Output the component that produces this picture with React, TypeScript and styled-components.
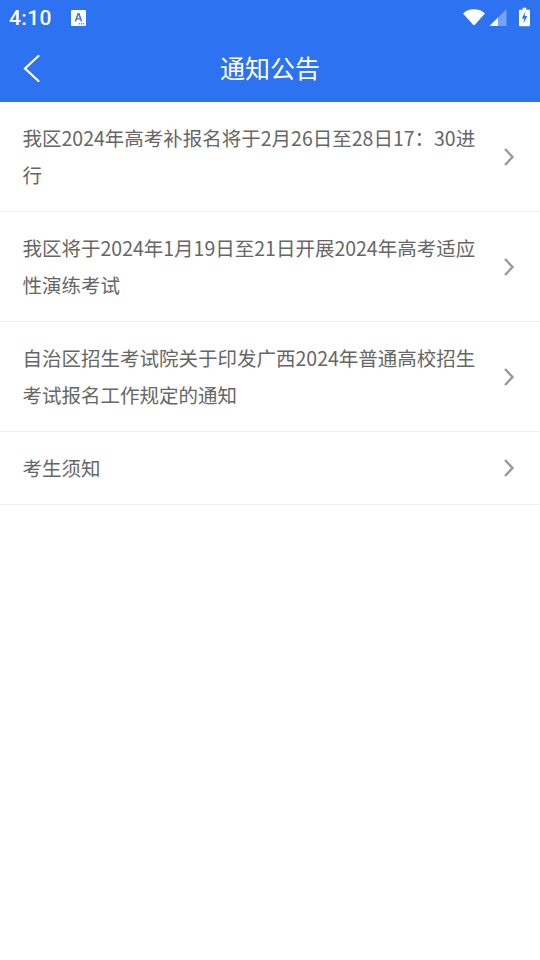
import React from "react";
import styled, { createGlobalStyle } from "styled-components";

const GlobalStyle = createGlobalStyle`
    html, body {
        margin: 0;
        padding: 0;
        background: #ffffff;
    }
`;

const PageContainer = styled.div`
    width: 540px;
    height: 960px;
    background: #ffffff;
    overflow: hidden;
    font-family: "Noto Sans CJK SC", "Noto Sans", sans-serif;
`;

const Header = styled.header`
    background: #2d72f0;
    height: 102px;
    display: flex;
    flex-direction: column;
`;

const StatusBar = styled.div`
    height: 36px;
    display: flex;
    align-items: center;
    padding: 0 10px 0 9px;
    color: #ffffff;
`;

const Clock = styled.span`
    font-family: Roboto, sans-serif;
    font-size: 21px;
    font-weight: 500;
    letter-spacing: 0.4px;
    line-height: 36px;
`;

const StatusLeft = styled.div`
    display: flex;
    align-items: center;
    gap: 19px;
    flex: 1;
`;

const StatusRight = styled.div`
    display: flex;
    align-items: center;
    padding-bottom: 2px;
`;

const TitleBar = styled.div`
    flex: 1;
    display: flex;
    align-items: center;
    padding: 0 20px 4px;
    position: relative;
`;

const BackButton = styled.span`
    display: flex;
    position: absolute;
    left: 22px;
    top: 17px;
`;

const Title = styled.h1`
    flex: 1;
    margin: 0;
    text-align: center;
    font-size: 25px;
    font-weight: 400;
    color: #ffffff;
    line-height: 32px;
`;

const List = styled.ul`
    list-style: none;
    margin: 0;
    padding: 0;
`;

const Row = styled.li`
    display: flex;
    align-items: center;
    justify-content: space-between;
    padding: 17px 23px 18px 22.5px;
    border-bottom: 1px solid #eeeeee;
`;

const RowText = styled.span`
    width: 456px;
    font-size: 19.5px;
    line-height: 37px;
    color: #666666;
`;

const Chevron = styled.svg`
    margin: 1px 2px 0 0;
    flex: none;
`;

const notices = [
    "我区2024年高考补报名将于2月26日至28日17：30进行",
    "我区将于2024年1月19日至21日开展2024年高考适应性演练考试",
    "自治区招生考试院关于印发广西2024年普通高校招生考试报名工作规定的通知",
    "考生须知",
];

export default function App() {
    return (
        <PageContainer>
            <GlobalStyle />
            <Header>
                <StatusBar>
                    <StatusLeft>
                        <Clock>4:10</Clock>
                        <svg width="15" height="16" viewBox="0 0 15 16">
                            <rect width="15" height="16" rx="1" fill="#ffffff" />
                            <path d="M3.6 11.5 L6.6 3 H8.4 L11.4 11.5 H9.8 L9.2 9.6 H5.8 L5.2 11.5 Z M6.3 8.2 H8.7 L7.5 4.8 Z" fill="#2d72f0" fillRule="evenodd" />
                            <rect x="8" y="13.2" width="1.2" height="1.2" fill="#2d72f0" />
                            <rect x="10" y="13.2" width="1.2" height="1.2" fill="#2d72f0" />
                            <rect x="12" y="13.2" width="1.2" height="1.2" fill="#2d72f0" />
                        </svg>
                    </StatusLeft>
                    <StatusRight>
                        <svg width="22" height="17" viewBox="0 0 24 18">
                            <path d="M0 4.5 C3 1.7 7 0 12 0 C17 0 21 1.7 24 4.5 L13 17 Q12 18 11 17 Z" fill="#ffffff" />
                        </svg>
                        <svg width="18" height="17" viewBox="0 0 18 18" style={{ marginLeft: 4 }}>
                            <path d="M18 0 V18 H0 Z" fill="#ffffff" opacity="0.35" />
                            <path d="M9 9 V18 H0 Z" fill="#ffffff" />
                        </svg>
                        <svg width="11" height="20" viewBox="0 0 12 20" style={{ marginLeft: 12 }}>
                            <path d="M4 0 H8 V2 H11 Q12 2 12 3 V19 Q12 20 11 20 H1 Q0 20 0 19 V3 Q0 2 1 2 H4 Z" fill="#ffffff" />
                            <path d="M7 4 L3 11.5 H5.6 L4.8 17 L9 9 H6.3 Z" fill="#2d72f0" />
                        </svg>
                    </StatusRight>
                </StatusBar>
                <TitleBar>
                    <BackButton>
                        <svg width="20" height="30" viewBox="0 0 20 30">
                            <path d="M16.5 3 L3 15.5 L16.5 28" fill="none" stroke="#ffffff" strokeWidth="2.2" strokeLinecap="round" strokeLinejoin="miter" />
                        </svg>
                    </BackButton>
                    <Title>通知公告</Title>
                </TitleBar>
            </Header>
            <List>
                {notices.map((text) => (
                    <Row key={text}>
                        <RowText>{text}</RowText>
                        <Chevron width="12" height="20" viewBox="0 0 12 20">
                            <path d="M2 2 L9.5 10 L2 18" fill="none" stroke="#999999" strokeWidth="2.4" />
                        </Chevron>
                    </Row>
                ))}
            </List>
        </PageContainer>
    );
}
